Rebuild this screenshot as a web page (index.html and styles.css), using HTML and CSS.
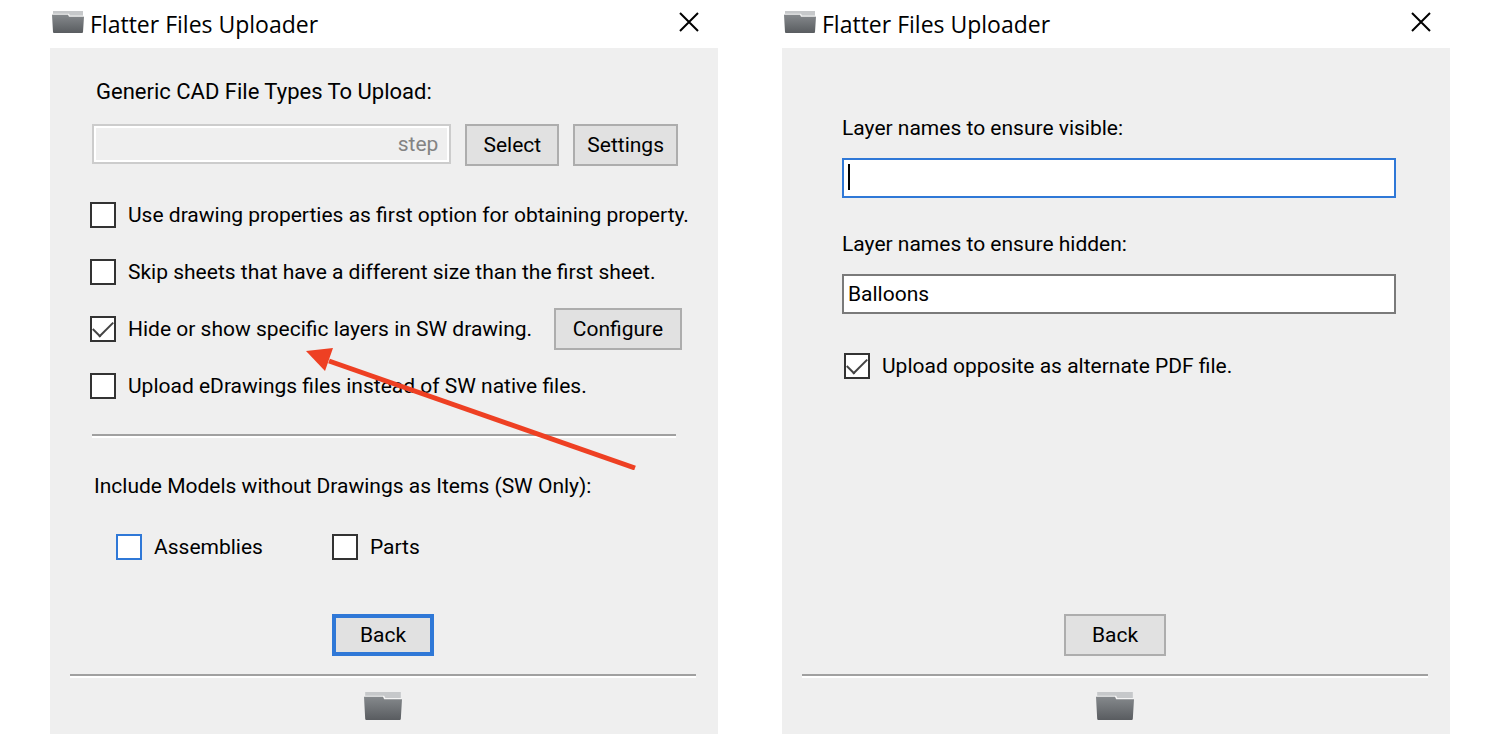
FILE: index.html
```
<!DOCTYPE html>
<html lang="en">
<head>
  <meta charset="UTF-8">
  <meta name="viewport" content="width=device-width, initial-scale=1.0">
  <title>Flatter Files Uploader</title>
  <link rel="stylesheet" href="styles.css">
</head>
<body>
  <!-- shared folder icon -->
  <svg width="0" height="0" class="defs" aria-hidden="true">
    <defs>
      <linearGradient id="folder-front" x1="0" y1="0" x2="0" y2="1">
        <stop offset="0" stop-color="#85898c"/>
        <stop offset="1" stop-color="#595c60"/>
      </linearGradient>
    </defs>
    <symbol id="folder" viewBox="0 0 32 23" preserveAspectRatio="none">
      <path d="M1 0H31V5H1Z" fill="#c6c8ca"/>
      <path d="M0 3H17L18 5H32V7H0Z" fill="#f4f4f4"/>
      <path d="M0 4H16L17 6H32L31 22Q31 23 30 23H2Q1 23 1 22Z" fill="url(#folder-front)"/>
    </symbol>
  </svg>

  <main class="screen">
    <section class="window">
      <header class="titlebar">
        <svg class="title-icon" aria-hidden="true"><use href="#folder"/></svg>
        <h1>Flatter Files Uploader</h1>
        <button class="close" aria-label="Close">
          <svg viewBox="0 0 20 20"><path d="M1 1L19 19M19 1L1 19"/></svg>
        </button>
      </header>
      <div class="panel">
        <form class="options">
          <label class="types-label" for="types">Generic CAD File Types To Upload:</label>
          <div class="types-row">
            <input type="text" id="types" class="types" value="step" disabled>
            <button type="button" class="btn">Select</button>
            <button type="button" class="btn">Settings</button>
          </div>
          <div class="checks">
            <div class="check-row">
              <label class="check"><input type="checkbox">Use drawing properties as first option for obtaining property.</label>
            </div>
            <div class="check-row">
              <label class="check"><input type="checkbox">Skip sheets that have a different size than the first sheet.</label>
            </div>
            <div class="check-row">
              <label class="check"><input type="checkbox" checked>Hide or show specific layers in SW drawing.</label>
              <button type="button" class="btn btn-configure">Configure</button>
            </div>
            <div class="check-row">
              <label class="check"><input type="checkbox">Upload eDrawings files instead of SW native files.</label>
            </div>
            <!-- arrow pointing at the layers option -->
            <svg class="arrow" viewBox="0 0 332 122" aria-hidden="true">
              <path d="M24 13L330 120" stroke="#ee4023" stroke-width="5"/>
              <path d="M1 3L28 0L20 23Z" fill="#ee4023"/>
            </svg>
          </div>
          <hr>
          <fieldset class="models">
            <legend>Include Models without Drawings as Items (SW Only):</legend>
            <div class="models-row">
              <label class="check check-focus"><input type="checkbox">Assemblies</label>
              <label class="check"><input type="checkbox">Parts</label>
            </div>
          </fieldset>
        </form>
        <footer class="footer">
          <button class="btn btn-back btn-default">Back</button>
          <hr>
          <svg class="footer-icon" aria-hidden="true"><use href="#folder"/></svg>
        </footer>
      </div>
    </section>

    <section class="window">
      <header class="titlebar">
        <svg class="title-icon" aria-hidden="true"><use href="#folder"/></svg>
        <h1>Flatter Files Uploader</h1>
        <button class="close" aria-label="Close">
          <svg viewBox="0 0 20 20"><path d="M1 1L19 19M19 1L1 19"/></svg>
        </button>
      </header>
      <div class="panel">
        <form class="layers">
          <label for="visible">Layer names to ensure visible:</label>
          <div class="field">
            <input type="text" id="visible" class="text text-focus">
            <span class="caret"></span>
          </div>
          <label for="hidden">Layer names to ensure hidden:</label>
          <div class="field">
            <input type="text" id="hidden" class="text" value="Balloons">
          </div>
          <label class="check check-alternate"><input type="checkbox" checked>Upload opposite as alternate PDF file.</label>
        </form>
        <footer class="footer">
          <button class="btn btn-back">Back</button>
          <hr>
          <svg class="footer-icon" aria-hidden="true"><use href="#folder"/></svg>
        </footer>
      </div>
    </section>
  </main>
</body>
</html>
```
FILE: styles.css
```
*{
  box-sizing: border-box;
}
body{
  margin: 0;
  background-color: #fff;
  color: #000;
  font-family: Roboto, "Liberation Sans", sans-serif;
  font-size: 21px;
  line-height: 28px;
}
input, button{
  font: inherit;
  color: inherit;
}
.defs{
  position: absolute;
}
.screen{
  display: grid;
  grid-template-columns: minmax(0, 1fr) minmax(0, 1fr);
  column-gap: 64px;
  min-height: 100vh;
  padding: 0 50px;
}
.window{
  display: flex;
  flex-direction: column;
}

/* title bar */
.titlebar{
  display: flex;
  align-items: center;
  height: 48px;
  padding: 0 19px 4px 2px;
}
.title-icon{
  width: 32px;
  height: 22px;
}
.titlebar h1{
  margin: 0 auto 0 6px;
  padding-top: 4px;
  font-family: "Open Sans", "Noto Sans", sans-serif;
  font-size: 23px;
  font-weight: 400;
}
.close{
  display: flex;
  padding: 0;
  border: 0;
  background: none;
}
.close svg{
  width: 20px;
  height: 20px;
  fill: none;
  stroke: #000;
  stroke-width: 2;
}

/* panel */
.panel{
  flex: 1;
  display: flex;
  flex-direction: column;
  background-color: #efefef;
}
hr{
  width: 100%;
  height: 4px;
  margin: 0;
  border: 0;
  border-top: 2px solid #a0a0a0;
  background-color: #fff;
}
.btn{
  min-width: 94px;
  height: 42px;
  padding: 0 12px;
  border: 2px solid #adadad;
  background-color: #e1e1e1;
}
.btn-configure{
  width: 128px;
}
.btn-back{
  width: 102px;
}
.btn-default{
  border: 4px solid #2f78d7;
}
.check{
  display: flex;
  align-items: center;
  gap: 12px;
  white-space: nowrap;
}
.check input{
  appearance: none;
  flex: none;
  width: 26px;
  height: 26px;
  margin: 0;
  border: 2px solid #333;
  background-color: #fff;
}
/* tick made of two borders */
.check input:checked::before{
  content: "";
  display: block;
  width: 18px;
  height: 9px;
  margin: 4px 2px;
  border: solid #444;
  border-width: 0 0 2px 2px;
  transform: translate(-1px, -1px) rotate(-45deg);
}
.check-focus input{
  border-color: #2f78d7;
}

/* left window */
.options{
  padding: 30px 40px 0 42px;
}
.types-label{
  display: block;
  margin: 0 0 18px 4px;
  font-size: 22px;
}
.types-row{
  display: flex;
  gap: 14px;
}
.types{
  flex: 1;
  min-width: 0;
  height: 40px;
  padding: 0 11px;
  border: 2px solid #ccc;
  outline: 2px solid #fff;
  outline-offset: -4px;
  background-color: #efefef;
  color: #838383;
  text-align: right;
}
.checks{
  position: relative;
  display: flex;
  flex-direction: column;
  gap: 15px;
  margin: 28px -4px 27px -2px;
}
.check-row{
  display: flex;
  align-items: center;
  justify-content: space-between;
  height: 42px;
}
.arrow{
  position: absolute;
  top: 154px;
  left: 215px;
  width: 332px;
  height: 122px;
}
.options hr{
  width: auto;
  margin-right: 2px;
}
.models{
  margin: 34px 0 0;
  padding: 0;
  border: 0;
}
.models legend{
  padding: 0 0 0 2px;
}
.models-row{
  display: flex;
  gap: 69px;
  margin: 33px 0 0 24px;
}

/* right window */
.layers{
  display: flex;
  flex-direction: column;
  padding: 66px 54px 0 60px;
}
.field{
  position: relative;
  margin: 16px 0 32px;
}
.text{
  display: block;
  width: 100%;
  height: 40px;
  padding: 0 4px;
  border: 2px solid #7a7a7a;
  background-color: #fff;
}
.text-focus{
  border-color: #2f78d7;
}
.caret{
  position: absolute;
  top: 6px;
  left: 6px;
  width: 2px;
  height: 26px;
  background-color: #000;
}
.check-alternate{
  margin: 6px 0 0 2px;
}

/* back button and folder */
.footer{
  display: flex;
  flex-direction: column;
  align-items: center;
  margin-top: auto;
  padding: 0 22px 14px 20px;
}
.footer hr{
  margin: 18px 0 14px;
}
.footer-icon{
  width: 38px;
  height: 28px;
}
```
